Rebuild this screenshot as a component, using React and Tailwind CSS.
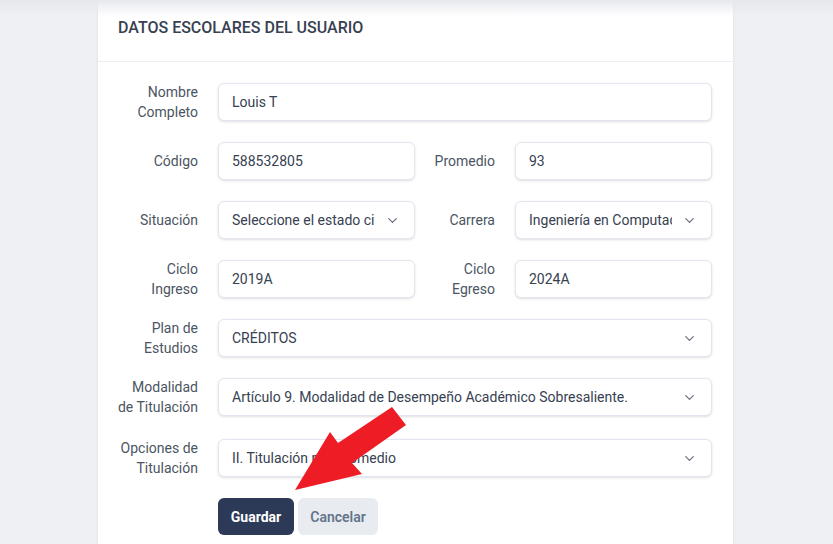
import { ChevronDown } from "lucide-react";

function Label({ lines }) {
    return (
        <label className="w-20 shrink-0 flex flex-col items-end text-sm leading-5 text-[#4b5563]">
            {lines.map((line) => (
                <span key={line} className="whitespace-nowrap">{line}</span>
            ))}
        </label>
    );
}

function Input({ value }) {
    return (
        <div className="flex-1 h-[38px] flex items-center px-[13px] bg-white border border-[#e2e6ee] rounded-md shadow-sm text-sm text-[#374151]">
            {value}
        </div>
    );
}

function Select({ value }) {
    return (
        <div className="flex-1 min-w-0 h-[38px] flex items-center pl-[13px] pr-[14px] bg-white border border-[#e2e6ee] rounded-md shadow-sm text-sm text-[#374151]">
            <span className="flex-1 min-w-0 overflow-hidden whitespace-nowrap mr-[10px]">{value}</span>
            <ChevronDown className="w-[15px] h-[15px] text-[#6b7280] shrink-0" strokeWidth={2} />
        </div>
    );
}

function Field({ label, children }) {
    return (
        <div className="flex-1 min-w-0 flex items-center gap-5">
            <Label lines={label} />
            {children}
        </div>
    );
}

export default function App() {
    return (
        <div className="relative min-h-[544px] bg-[#eef0f4] overflow-hidden" style={{ fontFamily: "Roboto, 'Liberation Sans', sans-serif" }}>
            <div className="ml-[98px] w-[635px] h-[560px] bg-white shadow-[0_0_3px_rgba(0,0,0,0.08)]">
                {/* Header */}
                <div className="h-[62px] px-5 pt-[18px] border-b border-[#eceef2]">
                    <h2 className="text-base leading-5 font-medium text-[#374151]">DATOS ESCOLARES DEL USUARIO</h2>
                </div>

                {/* Form */}
                <div className="pl-5 pr-[21px] pt-5 flex flex-col gap-[19px]">
                    <div className="h-10 flex">
                        <Field label={["Nombre", "Completo"]}>
                            <Input value="Louis T" />
                        </Field>
                    </div>
                    <div className="h-10 flex">
                        <Field label={["Código"]}><Input value="588532805" /></Field>
                        <Field label={["Promedio"]}><Input value="93" /></Field>
                    </div>
                    <div className="h-10 flex">
                        <Field label={["Situación"]}><Select value="Seleccione el estado civil" /></Field>
                        <Field label={["Carrera"]}><Select value="Ingeniería en Computación" /></Field>
                    </div>
                    <div className="h-10 flex">
                        <Field label={["Ciclo", "Ingreso"]}><Input value="2019A" /></Field>
                        <Field label={["Ciclo", "Egreso"]}><Input value="2024A" /></Field>
                    </div>
                    <div className="h-10 flex">
                        <Field label={["Plan de", "Estudios"]}>
                            <Select value="CRÉDITOS" />
                        </Field>
                    </div>
                    <div className="h-10 flex">
                        <Field label={["Modalidad", "de Titulación"]}>
                            <Select value="Artículo 9. Modalidad de Desempeño Académico Sobresaliente." />
                        </Field>
                    </div>
                    <div className="h-10 flex mt-[2px]">
                        <Field label={["Opciones de", "Titulación"]}>
                            <Select value="II. Titulación por Promedio" />
                        </Field>
                    </div>
                    <div className="flex gap-1 pl-[100px] mt-[1px]">
                        <button className="w-[76px] h-[37px] rounded-md bg-[#2c3a58] text-white text-sm font-bold">
                            Guardar
                        </button>
                        <button className="w-[80px] h-[37px] rounded-md bg-[#e8ebf0] text-[#64748b] text-sm font-semibold">
                            Cancelar
                        </button>
                    </div>
                </div>
            </div>

            {/* shadow from the top bar */}
            <div className="absolute top-0 left-0 right-0 h-4 bg-gradient-to-b from-[#e6e8ec] to-transparent pointer-events-none" />

            {/* red annotation arrow */}
            <svg className="absolute top-0 left-0 pointer-events-none" width="833" height="544">
                <polygon
                    points="392,407 406,425 352,463 362,474 295,490 330,432 338,443"
                    fill="#ee1c25"
                />
            </svg>
        </div>
    );
}
